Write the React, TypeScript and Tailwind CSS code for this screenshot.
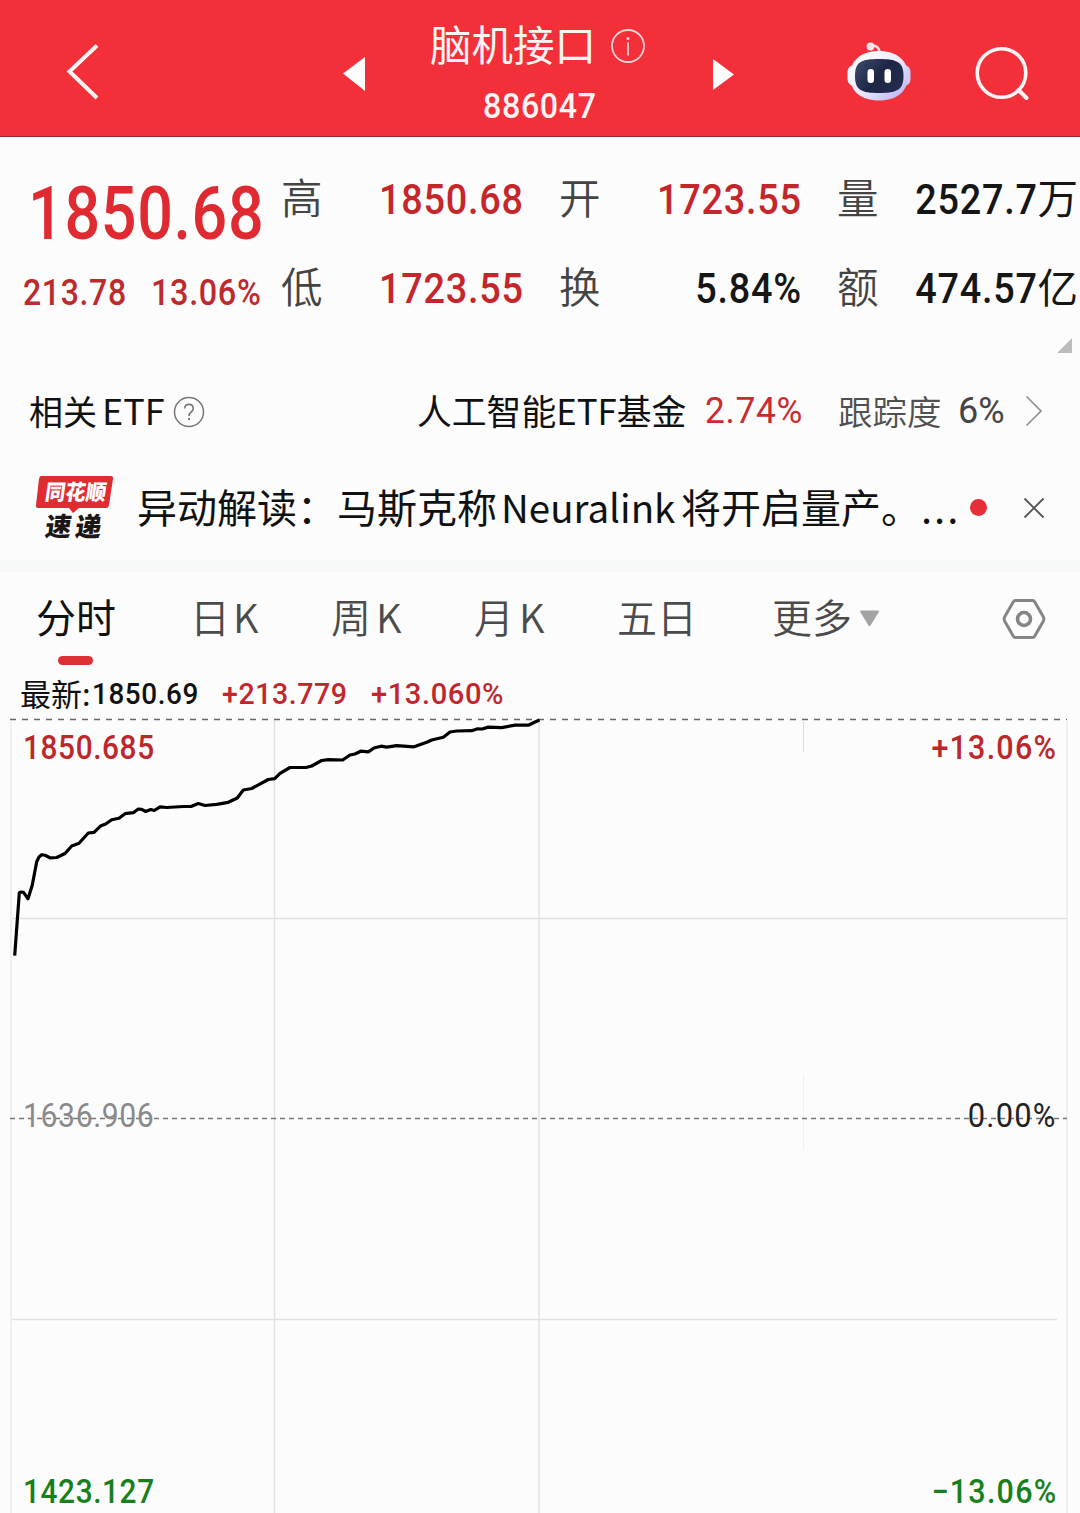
import type { ReactNode } from "react";

const linePoints =
  "14.7,955.7 19.3,893 21,892 23.5,892.3 28,898.8 32.3,885 36.7,861.7 39,857 41.7,854.7 45,855.3 50,857.8 56.7,857.5 65,853.5 71.7,846 79,843.3 88.3,833 94,832.3 101,825.7 105.7,824 111.7,819.7 119,818.3 125,813.7 133.3,812.7 138.3,809 141.7,809.3 145.7,811.5 150.7,809.5 154.3,810.5 160,806.9 166.7,807.5 183.3,806.5 191,806.5 198.3,803.5 205,805.5 216.7,804.3 228.3,802.3 237.3,798 243.3,790 251.7,788.5 268.3,779.5 274.7,778.6 280,773.3 290,767.5 306,767.5 311.7,766 321.7,760.5 328.3,759.7 342.7,760 350,755 355,754 360.7,751.2 368.3,751.8 374,748 381,746.2 386.7,747.2 396.7,745.7 414,746.8 426.7,742.3 431.7,740 443.3,737.3 450,732 456.7,731 471.7,730.7 477.7,728.8 482.3,729 488.3,727.1 501.7,727.6 515,725.1 528.3,725.2 535,722 539.5,720";

const cells = [
  [
    { label: "高", value: "1850.68", unit: "", red: true },
    { label: "低", value: "1723.55", unit: "", red: true },
  ],
  [
    { label: "开", value: "1723.55", unit: "", red: true },
    { label: "换", value: "5.84%", unit: "", red: false },
  ],
  [
    { label: "量", value: "2527.7", unit: "万", red: false },
    { label: "额", value: "474.57", unit: "亿", red: false },
  ],
];

// narrow digits: condensed horizontally, tracking opened up again
function Num({ className = "", children }: { className?: string; children: ReactNode }) {
  return (
    <span className={`inline-block font-[Roboto,sans-serif] whitespace-nowrap ${className}`}>
      {children}
    </span>
  );
}

function Robot() {
  return (
    <svg width="64" height="60" viewBox="0 0 64 60" fill="none">
      <defs>
        <linearGradient id="shell" x1="14" y1="10" x2="54" y2="58" gradientUnits="userSpaceOnUse">
          <stop stopColor="#ffffff" />
          <stop offset="0.5" stopColor="#ece9fd" />
          <stop offset="1" stopColor="#b9b4f3" />
        </linearGradient>
        <linearGradient id="visor" x1="12" y1="20" x2="50" y2="50" gradientUnits="userSpaceOnUse">
          <stop stopColor="#3a4668" />
          <stop offset="0.5" stopColor="#1d2644" />
          <stop offset="1" stopColor="#242c50" />
        </linearGradient>
      </defs>
      <path d="M24 4c5-1 8 1 9 7" stroke="#ffe3e6" strokeWidth="2.500" />
      <circle cx="23.500" cy="4.500" r="3.900" fill="#ffe3e6" />
      <rect x="0.500" y="23" width="14" height="21" rx="6.500" fill="#f5f3ff" />
      <rect x="49.500" y="23" width="14" height="21" rx="6.500" fill="#cfcbf8" />
      <path d="M32 9c18 0 29 9.500 29 25S50 58.500 32 58.500 3 49.500 3 34 14 9 32 9z" fill="url(#shell)" />
      <path d="M32 17c18 0 24.500 3 24.500 17S50 51 32 51 8 48 8 34s6-17 24-17z" fill="url(#visor)" />
      <rect x="20.500" y="27" width="6.500" height="14" rx="3.250" fill="#fff" />
      <rect x="37.500" y="27" width="6.500" height="14" rx="3.250" fill="#fff" />
    </svg>
  );
}

function Header() {
  return (
    <header className="flex h-[137px] items-start border-b border-[#8d2a31] bg-[#f32f39] text-[#fff4f4]">
      <svg className="mt-[43px] ml-[66px]" width="34" height="58" viewBox="0 0 34 58" fill="none">
        <path d="M31 2.500 3.500 28.500 31 55" stroke="currentColor" strokeWidth="4" />
      </svg>
      <svg className="mt-[57px] ml-[243px]" width="22" height="34" viewBox="0 0 22 34">
        <path d="M22 0v34L0 16.500z" fill="#fff" />
      </svg>
      <div className="ml-[65px] flex w-[218px] flex-col">
        <div className="mt-[16px] flex h-[54px] items-center">
          <span className="text-[41.5px] leading-[54px]">脑机接口</span>
          <svg className="mt-[6px] ml-[14px]" width="36" height="36" viewBox="0 0 36 36" fill="none">
            <circle cx="18" cy="18" r="16" stroke="#ffd5d7" strokeWidth="1.800" />
            <path d="M18 14.500v13" stroke="#ffd5d7" strokeWidth="1.800" />
            <circle cx="18" cy="10.500" r="1.500" fill="#ffd5d7" />
          </svg>
        </div>
        <Num className="mt-[17px] ml-[53px] origin-left scale-x-[0.92] text-[35px] leading-10 font-medium tracking-[0.02em]">
          886047
        </Num>
      </div>
      <svg className="mt-[59px] ml-[65px]" width="21" height="31" viewBox="0 0 21 31">
        <path d="M0 0v31l21-15.500z" fill="#fff" />
      </svg>
      <div className="mt-[42px] ml-[113px]">
        <Robot />
      </div>
      <svg className="mt-[46px] ml-[64px]" width="56" height="56" viewBox="0 0 56 56" fill="none">
        <circle cx="26.500" cy="27" r="24.300" stroke="currentColor" strokeWidth="3.600" />
        <path d="m43.500 44 8 8" stroke="currentColor" strokeWidth="4" strokeLinecap="round" />
      </svg>
    </header>
  );
}

function Quote() {
  return (
    <section className="flex h-[232px] flex-col">
      <div className="flex h-[201px]">
        <div className="w-[281px] shrink-0 pt-[40px] text-[#de2a30]">
          <Num className="ml-[28px] w-[253px] origin-left scale-x-[0.85] text-[74px] leading-[74px] font-medium tracking-[0.01em]">
            1850.68
          </Num>
          <div className="mt-[22px] flex text-[36px] leading-10 font-medium text-[#bd2a2e]">
            <Num className="ml-[23px] w-[128px] origin-left scale-x-[0.89] tracking-[0.02em]">213.78</Num>
            <Num className="origin-left scale-x-[0.9] tracking-[0.02em]">13.06%</Num>
          </div>
        </div>
        <div className="flex gap-[35px] pt-[18px]">
          {cells.map((column, i) => (
            <div key={i} className="w-[243px]">
              {column.map((c) => (
                <div
                  key={c.label}
                  className={`flex h-[89px] items-center text-[42.5px] leading-[48px] ${c.red ? "text-[#c5262b]" : "text-[#161616]"}`}
                >
                  <span className="mr-auto pb-[8px] text-[41.5px] font-[350] text-[#444]">{c.label}</span>
                  <Num className="origin-right scale-x-[0.89] font-medium tracking-[0.02em]">{c.value}</Num>
                  {c.unit && <span className="mr-[2px] pb-[5px] text-[40.5px]">{c.unit}</span>}
                </div>
              ))}
            </div>
          ))}
        </div>
      </div>
      <svg className="mr-2 ml-auto" width="15" height="15" viewBox="0 0 15 15">
        <path d="M15 0v15H0z" fill="#bdbdbd" />
      </svg>
    </section>
  );
}

function EtfRow() {
  return (
    <section className="flex h-[84px] items-center text-[34px] leading-[50px] text-[#111]">
      <span className="-mt-[2px] ml-[29px] w-[144px] whitespace-nowrap">
        相关<span className="ml-[5px] text-[36px]">ETF</span>
      </span>
      <svg className="mt-[1px]" width="32" height="32" viewBox="0 0 32 32" fill="none" stroke="#777">
        <circle cx="16" cy="16" r="14.500" strokeWidth="1.500" />
        <path d="M11.800 12.500c0-5.500 8.400-5.500 8.400 0 0 3.500-4.200 3.500-4.200 7.500" strokeWidth="1.600" />
        <path d="M16 22v2" strokeWidth="2" />
      </svg>
      <span className="-mt-[2px] ml-[212px] w-[288px] text-[34.8px] whitespace-nowrap">人工智能ETF基金</span>
      <Num className="w-[133px] origin-left scale-x-[0.98] text-[36px] tracking-[0.02em] text-[#cb2b30]">2.74%</Num>
      <span className="-mt-[2px] w-[120px] text-[34.5px] font-[350] whitespace-nowrap text-[#505050]">跟踪度</span>
      <Num className="w-[67px] origin-left text-[36px] text-[#444]">6%</Num>
      <svg width="18" height="32" viewBox="0 0 18 32" fill="none">
        <path d="M1.500 1.500 16 16 1.500 30.500" stroke="#909090" strokeWidth="1.700" />
      </svg>
    </section>
  );
}

function NewsRow() {
  return (
    <section className="flex h-[119px] items-start border-b-12 border-[#f7f9f9] text-[40px] leading-[56px] text-[#111]">
      <svg className="mt-[21px] ml-[35px]" width="80" height="84" viewBox="0 0 80 84">
        <path d="M6 2h70q2.500 0 2 3l-4 26q-.5 3-3 3H44l-6 5-4-5H3q-2.500 0-2-3L4 5q.5-3 2-3z" fill="#e02b32" />
        <g transform="skewX(-8)" fontFamily="'Noto Sans CJK SC', sans-serif" fontWeight="900">
          <text x="13" y="26.500" fontSize="21.500" textLength="61" lengthAdjust="spacingAndGlyphs" fill="#fff">
            同花顺
          </text>
          <text x="18" y="62" fontSize="26" textLength="56" fill="#1d1616">
            速递
          </text>
        </g>
      </svg>
      <div className="mt-[25px] ml-[22px] flex w-[833px] whitespace-nowrap">
        <span className="w-[364px]">异动解读：马斯克称</span>
        <span className="w-[180px] text-[38.5px]">Neuralink</span>
        <span>将开启量产。</span>
        <span className="tracking-[2px]">...</span>
      </div>
      <span className="mt-[46px] size-[17px] rounded-full bg-[#e62e38]" />
      <svg className="mt-[44px] ml-[36px]" width="22" height="22" viewBox="0 0 22 22">
        <path d="m1.500 1.500 19 19m0-19-19 19" stroke="#555" strokeWidth="1.800" />
      </svg>
    </section>
  );
}

function Tabs() {
  return (
    <nav className="flex h-[101px] items-start text-[40px] leading-[56px] font-[350] text-[#4b4b4b]">
      <div className="mt-[16px] ml-[36px] flex w-[154px] flex-col">
        <span className="font-normal text-[#111]">分时</span>
        <span className="mt-[12px] ml-[22px] h-[9px] w-[35px] rounded-full bg-[#dc3035]" />
      </div>
      <span className="mt-[16px] w-[141px]">日<span className="ml-[3px]">K</span></span>
      <span className="mt-[16px] w-[143px]">周<span className="ml-[5px]">K</span></span>
      <span className="mt-[16px] w-[143px]">月<span className="ml-[5px]">K</span></span>
      <span className="mt-[16px] w-[155px]">五日</span>
      <span className="mt-[16px] w-[87px]">更多</span>
      <svg className="mt-[38px]" width="21" height="17" viewBox="0 0 21 17">
        <path d="M2 .5h17q1.500 0 .8 1.500L11.500 15.500q-1 1.500-2 0L1.200 2Q.5.500 2 .500z" fill="#a3a3a3" />
      </svg>
      <svg className="mt-[26px] ml-[122px]" width="44" height="42" viewBox="0 0 44 42" fill="none" stroke="#858585">
        <path
          d="M13.500 2.500h17q1.500 0 2.300 1.500l8.600 15q1 2 0 4l-8.600 15q-.8 1.500-2.300 1.500h-17q-1.500 0-2.300-1.500L2.600 23q-1-2 0-4l8.600-15q.8-1.500 2.300-1.500z"
          strokeWidth="3"
        />
        <circle cx="22" cy="21" r="6.500" strokeWidth="3.600" />
      </svg>
    </nav>
  );
}

function Chart() {
  return (
    <section className="flex flex-col">
      <div className="flex h-[42px] items-center text-[30px] leading-[42px] text-[#c2262c]">
        <span className="-mt-[2px] ml-[20px] w-[72px] text-[31px] whitespace-nowrap text-[#111]">最新:</span>
        <Num className="w-[130px] origin-left scale-x-[0.93] font-medium tracking-[0.02em] text-[#111]">1850.69</Num>
        <Num className="w-[149px] origin-left scale-x-[0.95] font-medium tracking-[0.02em]">+213.779</Num>
        <Num className="origin-left scale-x-[0.97] font-medium tracking-[0.02em]">+13.060%</Num>
      </div>
      <div className="relative h-[798px]">
        <svg className="block" width="1080" height="798" viewBox="0 715 1080 798" fill="none">
          <path d="M11 722v791M1067 722v791" stroke="#f0f0f0" strokeWidth="2" />
          <path d="M274.500 720v793M539 720v793" stroke="#e2e2e2" strokeWidth="1.500" />
          <path d="M803.500 722v30" stroke="#dcdcdc" />
          <path d="M803.500 1075v75" stroke="#f0f0f0" />
          <path d="M12 918.500h1055M12 1319.500h1045" stroke="#e1e1e1" strokeWidth="1.300" />
          <path d="M10 719.500h1057" stroke="#6e6464" strokeWidth="1.500" strokeDasharray="6 6" />
          <path d="M10 1118.500h1057" stroke="#777" strokeWidth="1.500" strokeDasharray="5 4" />
          <polyline points={linePoints} stroke="#000" strokeWidth="3.200" strokeLinejoin="round" />
        </svg>
        <div className="absolute inset-x-0 top-[13px] flex justify-between px-[23px] text-[33.5px] leading-10 font-medium text-[#bb272b]">
          <Num className="origin-left scale-x-[0.89] tracking-[0.02em]">1850.685</Num>
          <Num className="origin-right scale-x-[0.91] tracking-[0.04em]">+13.06%</Num>
        </div>
        <div className="absolute inset-x-0 top-[381px] flex justify-between px-[23px] text-[33.5px] leading-10">
          <Num className="origin-left scale-x-[0.9] tracking-[0.02em] text-[#8a8a8a]">1636.906</Num>
          <Num className="origin-right scale-x-[0.92] tracking-[0.04em] text-[#222]">0.00%</Num>
        </div>
        <div className="absolute inset-x-0 top-[757px] flex justify-between px-[23px] text-[33.5px] leading-10 font-medium text-[#177f1b]">
          <Num className="origin-left scale-x-[0.89] tracking-[0.02em]">1423.127</Num>
          <Num className="origin-right scale-x-[0.91] tracking-[0.04em]">−13.06%</Num>
        </div>
      </div>
    </section>
  );
}

export default function App() {
  return (
    <main className="h-[1513px] w-[1080px] overflow-hidden bg-[#fcfcfc] font-['Noto_Sans_CJK_SC',sans-serif]">
      <Header />
      <Quote />
      <EtfRow />
      <NewsRow />
      <Tabs />
      <Chart />
    </main>
  );
}
